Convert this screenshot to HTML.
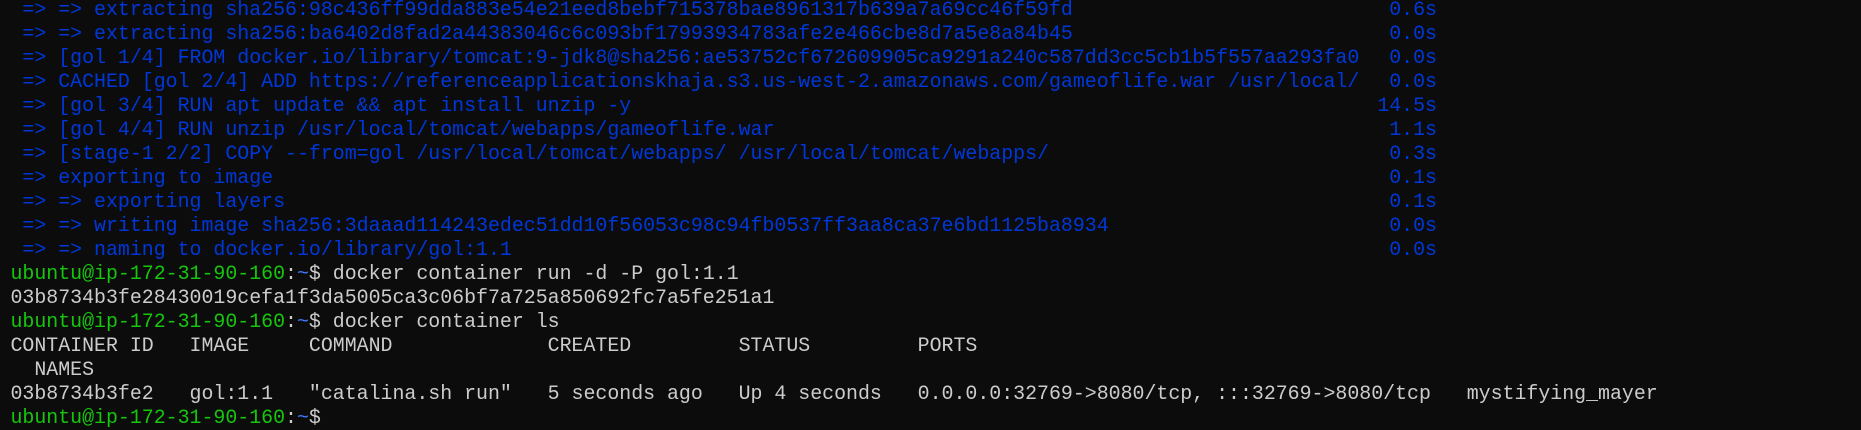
<!DOCTYPE html>
<html><head><meta charset="utf-8"><style>
html,body{margin:0;padding:0;background:#0c0c0c;width:1861px;height:428px;overflow:hidden}
#t{position:absolute;left:10.5px;top:-2px;font-family:"Liberation Mono",monospace;font-size:19.9px;line-height:24px;color:#cccccc;white-space:pre}
.l{position:relative;height:24px}
.b{color:#0037da}
.g{color:#16c60c}
.p{color:#3b78ff}
.r{position:absolute;right:0;top:0;color:#0037da}
#w{position:absolute;left:10.5px;top:-2px;width:1426.5px;font-family:"Liberation Mono",monospace;font-size:19.9px;line-height:24px;white-space:pre}
</style></head><body>
<div id="t"><div class="l b"> => => extracting sha256:98c436ff99dda883e54e21eed8bebf715378bae8961317b639a7a69cc46f59fd</div><div class="l b"> => => extracting sha256:ba6402d8fad2a44383046c6c093bf17993934783afe2e466cbe8d7a5e8a84b45</div><div class="l b"> => [gol 1/4] FROM docker.io/library/tomcat:9-jdk8@sha256:ae53752cf672609905ca9291a240c587dd3cc5cb1b5f557aa293fa0</div><div class="l b"> => CACHED [gol 2/4] ADD https://referenceapplicationskhaja.s3.us-west-2.amazonaws.com/gameoflife.war /usr/local/</div><div class="l b"> => [gol 3/4] RUN apt update &amp;&amp; apt install unzip -y</div><div class="l b"> => [gol 4/4] RUN unzip /usr/local/tomcat/webapps/gameoflife.war</div><div class="l b"> => [stage-1 2/2] COPY --from=gol /usr/local/tomcat/webapps/ /usr/local/tomcat/webapps/</div><div class="l b"> => exporting to image</div><div class="l b"> => => exporting layers</div><div class="l b"> => => writing image sha256:3daaad114243edec51dd10f56053c98c94fb0537ff3aa8ca37e6bd1125ba8934</div><div class="l b"> => => naming to docker.io/library/gol:1.1</div><div class="l"><span class="g">ubuntu@ip-172-31-90-160</span>:<span class="p">~</span>$ docker container run -d -P gol:1.1</div><div class="l">03b8734b3fe28430019cefa1f3da5005ca3c06bf7a725a850692fc7a5fe251a1</div><div class="l"><span class="g">ubuntu@ip-172-31-90-160</span>:<span class="p">~</span>$ docker container ls</div><div class="l">CONTAINER ID   IMAGE     COMMAND             CREATED         STATUS         PORTS</div><div class="l">  NAMES</div><div class="l">03b8734b3fe2   gol:1.1   "catalina.sh run"   5 seconds ago   Up 4 seconds   0.0.0.0:32769->8080/tcp, :::32769->8080/tcp   mystifying_mayer</div><div class="l"><span class="g">ubuntu@ip-172-31-90-160</span>:<span class="p">~</span>$</div></div>
<div id="w"><div class="l"><span class="r">0.6s</span></div><div class="l"><span class="r">0.0s</span></div><div class="l"><span class="r">0.0s</span></div><div class="l"><span class="r">0.0s</span></div><div class="l"><span class="r">14.5s</span></div><div class="l"><span class="r">1.1s</span></div><div class="l"><span class="r">0.3s</span></div><div class="l"><span class="r">0.1s</span></div><div class="l"><span class="r">0.1s</span></div><div class="l"><span class="r">0.0s</span></div><div class="l"><span class="r">0.0s</span></div></div>
</body></html>
